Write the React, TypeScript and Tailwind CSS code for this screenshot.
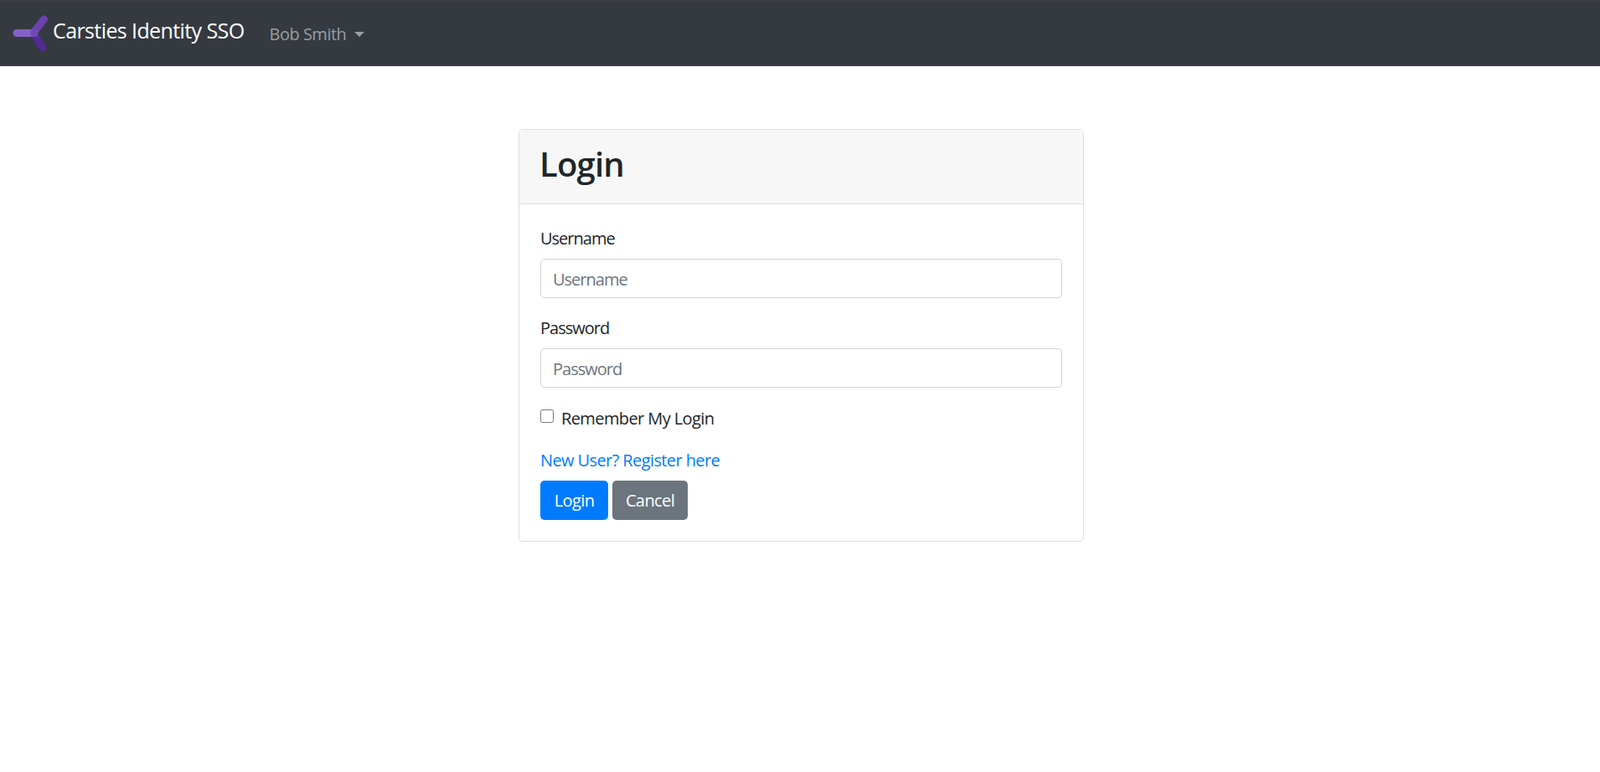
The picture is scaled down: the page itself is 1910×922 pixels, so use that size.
const uiFont = "font-['Open_Sans',sans-serif]"

function Logo() {
    return (
        <svg width="44" height="46" viewBox="0 0 44 46" className="shrink-0">
            <path d="M25 22 L37.5 6" stroke="#6b42ad" strokeWidth="9" strokeLinecap="round" />
            <path d="M25 22.5 L36 40" stroke="#512a92" strokeWidth="9" strokeLinecap="round" />
            <path d="M5 22.5 L26 22.5" stroke="#8560c8" strokeWidth="9" strokeLinecap="round" />
            <circle cx="25.5" cy="22.5" r="4.5" fill="#6f48b4" />
        </svg>
    )
}

function Field({ label }: { label: string }) {
    return (
        <div className="mb-[20px]">
            <label className="block pt-[1px] mb-[9px] text-[20px] leading-[30px] tracking-[-1px] text-[#212529]">{label}</label>
            <input
                type="text"
                placeholder={label}
                className="block w-full h-[47px] px-[14px] pt-[2px] text-[20px] tracking-[-1px] bg-white border border-[#ced4da] rounded-[5px] outline-none placeholder:text-[#6c757d]"
            />
        </div>
    )
}

export default function App() {
    return (
        <div className={`min-h-screen bg-white ${uiFont}`}>
            <nav className="h-[79px] bg-[#343a40] border-t border-[#3f3f3f] flex items-center pl-[15px]">
                <a className="flex items-center text-white text-[25px] tracking-[-0.6px] leading-[38px]">
                    <Logo />
                    <span className="ml-[4px] -mt-[8px]">Carsties Identity SSO</span>
                </a>
                <button className="ml-[30px] mt-[1px] flex items-center text-[20px] tracking-[-0.5px] text-[#9a9da0]">
                    Bob Smith
                    <span className="ml-[10px] w-0 h-0 border-x-[6px] border-x-transparent border-t-[6px] border-t-[#9a9da0]" />
                </button>
            </nav>

            <main className="flex justify-center pt-[75px] pl-[3px]">
                <div className="w-[675px] border border-[#dfdfdf] rounded-[5px] overflow-hidden">
                    <div className="h-[89px] px-[25px] flex items-center bg-[#f7f7f7] border-b border-[#dfdfdf]">
                        <h2 className="-ml-[1px] -mt-[7px] text-[40px] leading-[48px] font-semibold tracking-[-0.8px] text-[#212529]">Login</h2>
                    </div>
                    <div className="px-[25px] pt-[25px] pb-[25px]">
                        <Field label="Username" />
                        <Field label="Password" />
                        <label className="flex items-center pt-[2px] mb-[20px] h-[32px] text-[20px] tracking-[-0.6px] text-[#212529]">
                            <input type="checkbox" className="w-[16px] h-[16px] mr-[9px] -mt-[7px]" />
                            Remember My Login
                        </label>
                        <a className="block text-[20px] leading-[30px] tracking-[-0.6px] text-[#007bff]">New User? Register here</a>
                        <div className="mt-[9px] flex gap-[5px]">
                            <button className="h-[47px] w-[81px] rounded-[5px] bg-[#007bff] text-white text-[20px] tracking-[-0.6px]">Login</button>
                            <button className="h-[47px] w-[90px] rounded-[5px] bg-[#6c757d] text-white text-[20px] tracking-[-0.6px]">Cancel</button>
                        </div>
                    </div>
                </div>
            </main>
        </div>
    )
}
